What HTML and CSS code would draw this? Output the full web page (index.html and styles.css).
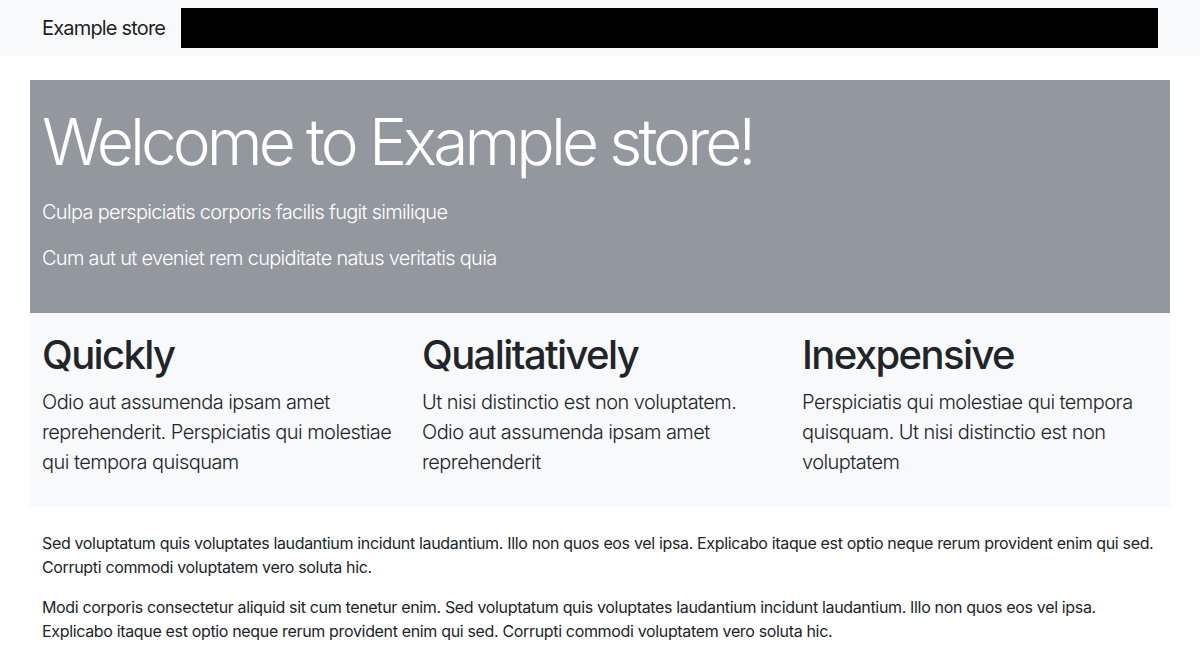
FILE: index.html
```html
<!DOCTYPE html>
<html lang="en">
<head>
<meta charset="utf-8">
<title>Example store</title>
<link rel="stylesheet" href="styles.css">
</head>
<body>
<nav class="navbar">
  <div class="container nav-inner">
    <a class="brand" href="#">Example store</a>
    <div class="nav-block"></div>
  </div>
</nav>
<main class="container main">
  <section class="hero">
    <h1 class="display">Welcome to Example store!</h1>
    <p class="lead">Culpa perspiciatis corporis facilis fugit similique</p>
    <p class="lead">Cum aut ut eveniet rem cupiditate natus veritatis quia</p>
  </section>
  <section class="features">
    <div class="feature">
      <h2 class="feature-title">Quickly</h2>
      <p class="lead dark">Odio aut assumenda ipsam amet reprehenderit. Perspiciatis qui molestiae qui tempora quisquam</p>
    </div>
    <div class="feature">
      <h2 class="feature-title">Qualitatively</h2>
      <p class="lead dark">Ut nisi distinctio est non voluptatem. Odio aut assumenda ipsam amet reprehenderit</p>
    </div>
    <div class="feature">
      <h2 class="feature-title">Inexpensive</h2>
      <p class="lead dark">Perspiciatis qui molestiae qui tempora quisquam. Ut nisi distinctio est non voluptatem</p>
    </div>
  </section>
  <section class="body-text">
    <p>Sed voluptatum quis voluptates laudantium incidunt laudantium. Illo non quos eos vel ipsa. Explicabo itaque est optio neque rerum provident enim qui sed. Corrupti commodi voluptatem vero soluta hic.</p>
    <p>Modi corporis consectetur aliquid sit cum tenetur enim. Sed voluptatum quis voluptates laudantium incidunt laudantium. Illo non quos eos vel ipsa. Explicabo itaque est optio neque rerum provident enim qui sed. Corrupti commodi voluptatem vero soluta hic.</p>
  </section>
</main>
</body>
</html>
```
FILE: styles.css
```css
* { box-sizing: border-box; }
html, body { margin: 0; padding: 0; }
body {
  font-family: Inter, "Liberation Sans", sans-serif;
  font-size: 16px;
  line-height: 1.5;
  color: #212529;
  background: #fff;
  letter-spacing: -0.34px;
}
p { margin: 0 0 16px; }
h1, h2 { margin: 0; }

.container {
  width: 1140px;
  margin: 0 auto;
  padding: 0 12px;
}

.navbar {
  background: #f8f9fa;
  padding: 8px 0;
}
.nav-inner {
  display: flex;
  align-items: center;
}
.brand {
  font-size: 20px;
  line-height: 30px;
  padding: 5px 0;
  margin-right: 16px;
  color: rgba(0,0,0,0.9);
  text-decoration: none;
  letter-spacing: -0.82px;
}
.nav-block {
  flex: 1;
  height: 40px;
  background: #000;
}

.main { padding: 24px 0 0; }

.hero {
  background: #93989f;
  color: #fff;
  padding: 24px 12px 24px;
}
.display {
  font-size: 64px;
  font-weight: 300;
  line-height: 1.2;
  margin-bottom: 16px;
  letter-spacing: -3.9px;
}
.lead {
  font-size: 20px;
  line-height: 30px;
  font-weight: 300;
  letter-spacing: -0.7px;
}

.features {
  background: #f8f9fa;
  display: grid;
  grid-template-columns: repeat(3, 1fr);
  padding: 18px 0 14px;
}
.feature { padding: 0 12px; }
.feature-title {
  font-size: 40px;
  font-weight: 500;
  line-height: 1.2;
  margin-bottom: 8px;
  letter-spacing: -1.6px;
}
.lead.dark {
  color: #212529;
  letter-spacing: -0.55px;
}

.body-text {
  padding: 24px 12px 0;
}
```
